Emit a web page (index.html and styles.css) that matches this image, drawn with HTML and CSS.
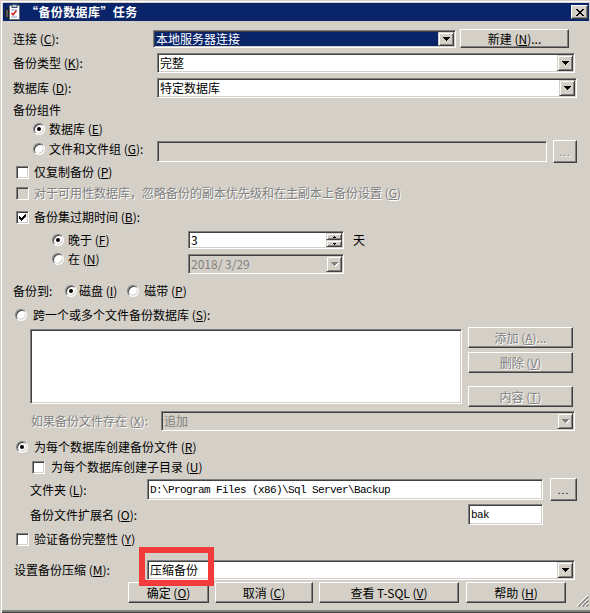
FILE: index.html
```html
<!DOCTYPE html>
<html lang="zh-CN">
<head>
<meta charset="utf-8">
<title>备份数据库</title>
<link rel="stylesheet" href="styles.css">
</head>
<body>
<div class="window">
  <div class="titlebar">
    <svg class="ticon" width="16" height="16" viewBox="0 0 16 16">
      <rect x="4.5" y="1.5" width="10" height="14" fill="#fff" stroke="#6c6c6c"/>
      <rect x="7" y="0.5" width="5" height="3" fill="#b8c4d8" stroke="#405070"/>
      <path d="M6 6h6M6 13h6" stroke="#7f9ad0"/>
      <path d="M6.5 9l1.5 1.8 3.5-4.3" stroke="#d42020" stroke-width="1.5" fill="none"/>
      <rect x="0.5" y="5.5" width="3" height="8" fill="#5a5a5a" stroke="#202020"/>
    </svg>
    <span class="ttext">“备份数据库”任务</span>
    <span class="close raised">
      <svg width="8" height="7" viewBox="0 0 8 7"><path d="M0 0h2v1h-2zM6 0h2v1h-2zM1 1h2v1h-2zM5 1h2v1h-2zM2 2h4v1h-4zM3 3h2v1h-2zM2 4h4v1h-4zM1 5h2v1h-2zM5 5h2v1h-2zM0 6h2v1h-2zM6 6h2v1h-2z"/></svg>
    </span>
  </div>

  <div class="content">
    <div class="row r-conn">
      <span class="lbl l-conn">连接 (<u>C</u>):</span>
      <div class="combo sunken c-conn">
        <span class="ctext selected">本地服务器连接</span>
        <span class="dd"><svg width="7" height="4" viewBox="0 0 7 4"><path d="M0 0h7v1h-1v1h-1v1h-1v1h-1v-1h-1v-1h-1v-1h-1z"/></svg></span>
      </div>
      <div class="btn b-new">新建 (<u>N</u>)...</div>
    </div>

    <div class="row r-type">
      <span class="lbl l-wide">备份类型 (<u>K</u>):</span>
      <div class="combo sunken c-type">
        <span class="ctext">完整</span>
        <span class="dd"><svg width="7" height="4" viewBox="0 0 7 4"><path d="M0 0h7v1h-1v1h-1v1h-1v1h-1v-1h-1v-1h-1v-1h-1z"/></svg></span>
      </div>
    </div>

    <div class="row r-db">
      <span class="lbl l-wide">数据库 (<u>D</u>):</span>
      <div class="combo sunken c-db">
        <span class="ctext">特定数据库</span>
        <span class="dd"><svg width="7" height="4" viewBox="0 0 7 4"><path d="M0 0h7v1h-1v1h-1v1h-1v1h-1v-1h-1v-1h-1v-1h-1z"/></svg></span>
      </div>
    </div>

    <div class="row r-grp"><span class="lbl">备份组件</span></div>

    <div class="row r-rdb">
      <span class="rb checked"></span>
      <span class="opt">数据库 (<u>E</u>)</span>
    </div>

    <div class="row r-files">
      <span class="rb"></span>
      <span class="opt l-files">文件和文件组 (<u>G</u>):</span>
      <div class="field sunken disabled f-files"></div>
      <div class="btn dis b-browse1">...</div>
    </div>

    <div class="row r-copy">
      <span class="cb"></span>
      <span class="opt">仅复制备份 (<u>P</u>)</span>
    </div>

    <div class="row r-ag">
      <span class="cb disabled"></span>
      <span class="opt dtext">对于可用性数据库，忽略备份的副本优先级和在主副本上备份设置 (<u>G</u>)</span>
    </div>

    <div class="row r-exp">
      <span class="cb">
        <svg width="7" height="7" viewBox="0 0 7 7"><path d="M6 0h1v1h-1zM5 1h2v1h-2zM0 2h1v1h-1zM4 2h3v1h-3zM0 3h2v1h-2zM3 3h3v1h-3zM0 4h5v1h-5zM1 5h3v1h-3zM2 6h1v1h-1z"/></svg>
      </span>
      <span class="opt">备份集过期时间 (<u>B</u>):</span>
    </div>

    <div class="r-expsub">
      <div class="exp-radios">
        <div class="row radio-line"><span class="rb checked"></span><span class="opt">晚于 (<u>F</u>)</span></div>
        <div class="row radio-line second"><span class="rb"></span><span class="opt">在 (<u>N</u>)</span></div>
      </div>
      <div class="exp-fields">
        <div class="row spin-line">
          <div class="spin sunken">
            <span class="ctext">3</span>
            <span class="spinbtns">
              <span class="sbtn"><svg width="3" height="2" viewBox="0 0 3 2"><path d="M1 0h1v1h1v1h-3v-1h1z"/></svg></span>
              <span class="sbtn"><svg width="3" height="2" viewBox="0 0 3 2"><path d="M0 0h3v1h-1v1h-1v-1h-1z"/></svg></span>
            </span>
          </div>
          <span class="days">天</span>
        </div>
        <div class="combo sunken disabled c-date">
          <span class="ctext gray">2018/ 3/29</span>
          <span class="dd"><svg width="8" height="5" viewBox="0 0 8 5"><path fill="#fff" d="M1 1h7v1h-1v1h-1v1h-1v1h-1v-1h-1v-1h-1v-1h-1z"/><path fill="#808080" d="M0 0h7v1h-1v1h-1v1h-1v1h-1v-1h-1v-1h-1v-1h-1z"/></svg></span>
        </div>
      </div>
    </div>

    <div class="row r-to">
      <span class="lbl">备份到:</span>
      <span class="rb checked rb-disk"></span>
      <span class="opt o-disk">磁盘 (<u>I</u>)</span>
      <span class="rb rb-tape"></span>
      <span class="opt o-tape">磁带 (<u>P</u>)</span>
    </div>

    <div class="row r-span">
      <span class="rb"></span>
      <span class="opt o-span">跨一个或多个文件备份数据库 (<u>S</u>):</span>
    </div>

    <div class="row r-list">
      <div class="listbox sunken"></div>
      <div class="listbtns">
        <div class="btn dis">添加 (<u>A</u>)...</div>
        <div class="btn dis b-del">删除 (<u>V</u>)</div>
        <div class="btn dis b-content">内容 (<u>T</u>)</div>
      </div>
    </div>

    <div class="row r-exists">
      <span class="lbl dtext l-exists">如果备份文件存在 (<u>X</u>):</span>
      <div class="combo sunken disabled c-exists">
        <span class="ctext gray">追加</span>
        <span class="dd"><svg width="8" height="5" viewBox="0 0 8 5"><path fill="#fff" d="M1 1h7v1h-1v1h-1v1h-1v1h-1v-1h-1v-1h-1v-1h-1z"/><path fill="#808080" d="M0 0h7v1h-1v1h-1v1h-1v1h-1v-1h-1v-1h-1v-1h-1z"/></svg></span>
      </div>
    </div>

    <div class="row r-perdb">
      <span class="rb checked"></span>
      <span class="opt o-perdb">为每个数据库创建备份文件 (<u>R</u>)</span>
    </div>

    <div class="row r-subdir">
      <span class="cb"></span>
      <span class="opt o-subdir">为每个数据库创建子目录 (<u>U</u>)</span>
    </div>

    <div class="row r-folder">
      <span class="lbl l-folder">文件夹 (<u>L</u>):</span>
      <div class="field sunken f-folder"><span class="mono">D:\Program Files (x86)\Sql Server\Backup</span></div>
      <div class="btn b-browse2">...</div>
    </div>

    <div class="row r-ext">
      <span class="lbl l-ext">备份文件扩展名 (<u>O</u>):</span>
      <div class="field sunken f-ext"><span class="mono">bak</span></div>
    </div>

    <div class="row r-verify">
      <span class="cb"></span>
      <span class="opt">验证备份完整性 (<u>Y</u>)</span>
    </div>

    <div class="row r-comp">
      <span class="lbl l-comp">设置备份压缩 (<u>M</u>):</span>
      <div class="combo sunken c-comp">
        <span class="ctext">压缩备份</span>
        <span class="dd"><svg width="7" height="4" viewBox="0 0 7 4"><path d="M0 0h7v1h-1v1h-1v1h-1v1h-1v-1h-1v-1h-1v-1h-1z"/></svg></span>
      </div>
    </div>

    <div class="row r-btns">
      <div class="btn b-ok">确定 (<u>O</u>)</div>
      <div class="btn b-cancel">取消 (<u>C</u>)</div>
      <div class="btn b-tsql">查看 T-SQL (<u>V</u>)</div>
      <div class="btn b-help">帮助 (<u>H</u>)</div>
    </div>
  </div>

  <svg class="grip" width="13" height="13" viewBox="0 0 13 13">
    <path d="M12 1L1 12M12 5L5 12M12 9L9 12" stroke="#fff" stroke-width="1"/>
    <path d="M12.5 2.5L2.5 12.5M12.5 6.5L6.5 12.5M12.5 10.5L10.5 12.5" stroke="#808080" stroke-width="1.4"/>
  </svg>
  <div class="mark"></div>
</div>
</body>
</html>
```

FILE: styles.css
```css
html, body {
  margin: 0;
  padding: 0;
  background: #d4d0c8;
  overflow: hidden;
}
body {
  font-family: "Noto Sans CJK SC", "Liberation Sans", sans-serif;
  font-size: 12px;
  line-height: 16px;
  color: #000;
}
u { text-decoration: underline; text-underline-offset: 1px; }

.window {
  position: relative;
  width: 590px;
  height: 613px;
  box-sizing: border-box;
  overflow: hidden;
  box-shadow: inset 1px 1px 0 #d4d0c8, inset 2px 2px 0 #fff,
              inset 0 -1px 0 #404040, inset 0 -3px 0 #808080;
}

/* title bar */
.titlebar {
  margin: 3px 1px 0 3px;
  height: 18px;
  background: #0a246a;
  display: flex;
  align-items: center;
  color: #fff;
  font-weight: bold;
}
.ticon { margin-left: 2px; flex: none; }
.ttext { margin-left: 5px; font-size: 12px; letter-spacing: 0.4px; }
.close {
  margin-left: auto;
  margin-right: 1px;
  width: 17px;
  height: 14px;
  display: flex;
  align-items: center;
  justify-content: center;
}

/* 3D borders */
.sunken {
  box-sizing: border-box;
  border: 1px solid;
  border-color: #808080 #fff #fff #808080;
  box-shadow: inset 1px 1px 0 #404040, inset -1px -1px 0 #d4d0c8;
  padding: 1px;
  background: #fff;
}
.raised, .btn {
  box-sizing: border-box;
  background: #d4d0c8;
  border: 1px solid;
  border-color: #fff #404040 #404040 #fff;
  box-shadow: inset -1px -1px 0 #808080;
}
.btn {
  display: flex;
  align-items: center;
  justify-content: center;
  white-space: nowrap;
  flex: none;
}
.btn.dis, .dtext {
  color: #808080;
  text-shadow: 1px 1px 0 #fff;
}

/* combo */
.combo { display: flex; flex: none; }
.combo.disabled, .field.disabled { background: #d4d0c8; }
.ctext {
  flex: 1;
  display: flex;
  align-items: center;
  padding-left: 1px;
  white-space: nowrap;
}
.ctext.selected { background: #0a246a; color: #fff; line-height: 14px; }
.ctext.gray { color: #808080; }
.dd {
  flex: none;
  width: 16px;
  box-sizing: border-box;
  background: #d4d0c8;
  border: 1px solid;
  border-color: #d4d0c8 #404040 #404040 #d4d0c8;
  box-shadow: inset 1px 1px 0 #fff, inset -1px -1px 0 #808080;
  display: flex;
  align-items: center;
  justify-content: center;
}
.dd svg { margin-left: 1px; }

.field { flex: none; display: flex; align-items: center; }
.mono {
  font-family: "Liberation Mono", "DejaVu Sans Mono", monospace;
  font-size: 11px;
  letter-spacing: -0.6px;
  padding-left: 1px;
  white-space: nowrap;
}

/* radios and checkboxes */
.rb {
  flex: none;
  width: 12px;
  height: 12px;
  box-sizing: border-box;
  border-radius: 50%;
  border: 1px solid;
  border-color: #808080 #fff #fff #808080;
  box-shadow: inset 1px 1px 0 #404040, inset -1px -1px 0 #d4d0c8;
  background: #fff;
  position: relative;
}
.rb.checked::after {
  content: "";
  position: absolute;
  left: 3px;
  top: 3px;
  width: 4px;
  height: 4px;
  border-radius: 50%;
  background: #000;
}
.cb {
  flex: none;
  width: 13px;
  height: 13px;
  box-sizing: border-box;
  border: 1px solid;
  border-color: #808080 #fff #fff #808080;
  box-shadow: inset 1px 1px 0 #404040, inset -1px -1px 0 #d4d0c8;
  background: #fff;
  display: flex;
  align-items: center;
  justify-content: center;
}
.cb.disabled { background: #d4d0c8; }
.opt { white-space: nowrap; }

/* rows */
.row { display: flex; align-items: center; }
.lbl { flex: none; white-space: nowrap; }

.r-conn { margin-top: 8px; height: 19px; padding-left: 13px; }
.l-conn { width: 140px; }
.c-conn { width: 303px; height: 18px; }
.b-new { width: 109px; height: 19px; margin-left: 4px; }

.r-type { margin-top: 5px; height: 20px; padding-left: 13px; }
.r-db { margin-top: 5px; height: 20px; padding-left: 13px; }
.l-wide { width: 144px; }
.c-type { width: 418px; height: 20px; }
.c-db { width: 420px; height: 20px; }

.r-grp { margin-top: 4px; height: 16px; padding-left: 13px; }

.r-rdb { margin-top: 3px; height: 16px; padding-left: 33px; }
.r-rdb .opt { margin-left: 4px; }

.r-files { margin-top: 3px; height: 23px; padding-left: 33px; align-items: flex-start; }
.r-files .rb { margin-top: 3px; }
.l-files { margin-left: 4px; margin-top: 1px; width: 108px; }
.f-files { width: 390px; height: 21px; margin-top: 1px; }
.b-browse1 { width: 24px; height: 23px; margin-left: 6px; font-size: 10px; letter-spacing: 1px; }

.r-copy { margin-top: 1px; height: 16px; padding-left: 16px; }
.r-ag { margin-top: 5px; height: 16px; padding-left: 16px; }
.r-exp { margin-top: 8px; height: 16px; padding-left: 16px; }
.r-copy .opt, .r-ag .opt, .r-exp .opt, .r-verify .opt { margin-left: 5px; }

.r-expsub { margin-top: 6px; display: flex; align-items: flex-start; padding-left: 52px; }
.exp-radios { width: 136px; padding-top: 1px; }
.radio-line { height: 16px; }
.radio-line .opt { margin-left: 4px; }
.radio-line.second { margin-top: 3px; }
.spin-line { height: 18px; }
.spin { display: flex; width: 156px; height: 18px; }
.spin .ctext { padding-left: 1px; line-height: 14px; }
.spinbtns { display: flex; flex-direction: column; width: 16px; }
.sbtn {
  flex: 1;
  box-sizing: border-box;
  background: #d4d0c8;
  border: 1px solid;
  border-color: #d4d0c8 #404040 #404040 #d4d0c8;
  box-shadow: inset 1px 1px 0 #fff, inset -1px -1px 0 #808080;
  display: flex;
  align-items: center;
  justify-content: center;
}
.days { margin-left: 9px; }
.c-date { width: 156px; height: 20px; margin-top: 5px; }

.r-to { margin-top: 9px; height: 16px; padding-left: 13px; }
.r-to .lbl { width: 52px; }
.o-disk { margin-left: 2px; }
.rb-tape { margin-left: 10px; }
.o-tape { margin-left: 5px; }

.r-span { margin-top: 8px; height: 16px; padding-left: 15px; }
.o-span { margin-left: 6px; }

.r-list { margin-top: 4px; height: 80px; padding-left: 30px; align-items: flex-start; }
.listbox { width: 432px; height: 75px; margin-top: 2px; flex: none; }
.listbtns { margin-left: 6px; width: 105px; display: flex; flex-direction: column; }
.listbtns .btn { height: 21px; }
.b-del { margin-top: 4px; }
.b-content { margin-top: 13px; }

.r-exists { margin-top: 4px; height: 20px; padding-left: 31px; }
.l-exists { width: 130px; }
.c-exists { width: 414px; height: 20px; }

.r-perdb { margin-top: 8px; height: 16px; padding-left: 16px; }
.o-perdb { margin-left: 6px; }
.r-subdir { margin-top: 4px; height: 16px; padding-left: 32px; }
.o-subdir { margin-left: 6px; }

.r-folder { margin-top: 3px; height: 23px; padding-left: 30px; }
.l-folder { width: 117px; }
.f-folder { width: 396px; height: 21px; }
.b-browse2 { width: 27px; height: 23px; margin-left: 7px; font-size: 10px; letter-spacing: 1px; }

.r-ext { margin-top: 3px; height: 21px; padding-left: 30px; }
.l-ext { width: 438px; }
.f-ext { width: 75px; height: 21px; }

.r-verify { margin-top: 6px; height: 16px; padding-left: 16px; }

.r-comp { margin-top: 13px; height: 20px; padding-left: 14px; }
.l-comp { width: 133px; }
.c-comp { width: 428px; height: 20px; }

.r-btns { margin-top: 2px; height: 21px; padding-left: 128px; }
.r-btns .btn { height: 21px; }
.b-ok { width: 81px; }
.b-cancel { width: 98px; margin-left: 6px; }
.b-tsql { width: 140px; margin-left: 6px; }
.b-help { width: 100px; margin-left: 7px; }

/* overlays */
.grip { position: absolute; right: 1px; bottom: 6px; }
.mark {
  position: absolute;
  left: 139px;
  top: 547px;
  width: 75px;
  height: 39px;
  box-sizing: border-box;
  border: 6px solid #f43b3b;
}
```
